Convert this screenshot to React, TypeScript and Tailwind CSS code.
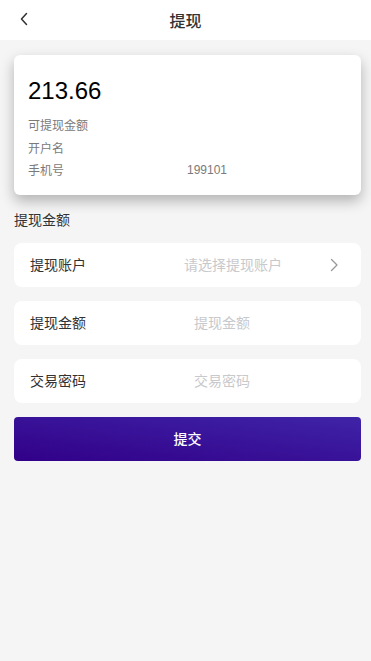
import { type FC } from 'react';

const FONT = { fontFamily: '"PingFang SC", "Noto Sans CJK SC", "Noto Sans", sans-serif' };

interface FieldRowProps {
  label: string;
  placeholder: string;
  arrow?: boolean;
  indent: string;
}

const FieldRow: FC<FieldRowProps> = ({ label, placeholder, arrow, indent }) => (
  <div className="flex h-[44px] items-center rounded-[8px] bg-white pl-4 pr-[19px]">
    <span className="w-[100px] text-[14px] text-[#323233]">{label}</span>
    <span className={`flex-1 text-[14px] text-[#c8c9cc] ${indent}`}>{placeholder}</span>
    {arrow ? (
      <svg width="16" height="16" viewBox="0 0 16 16" fill="none" className="text-[#969799]">
        <path d="M5.5 2.5 L11 8 L5.5 13.5" stroke="currentColor" strokeWidth="1.3" strokeLinecap="round" strokeLinejoin="round" />
      </svg>
    ) : null}
  </div>
);

const App: FC = () => {
  return (
    <div className="min-h-[661px] w-full bg-[#f5f5f5]" style={FONT}>
      <header className="relative flex h-[40px] items-center justify-center bg-white">
        <button type="button" className="absolute left-[15px] top-[10px] text-[#323233]">
          <svg width="18" height="18" viewBox="0 0 18 18" fill="none">
            <path d="M11.5 3.5 L6.5 9 L11.5 14.5" stroke="currentColor" strokeWidth="1.5" strokeLinecap="round" strokeLinejoin="round" />
          </svg>
        </button>
        <h1 className="text-[16px] font-medium text-[#323233]">提现</h1>
      </header>

      <div className="pl-[14px] pr-[10px] pt-[15px]">
        <div className="rounded-[6px] bg-white px-[14px] pb-[13px] pt-[22px] shadow-[0_6px_14px_rgba(0,0,0,0.28)]">
          <div className="text-[24px] leading-[28px] text-black" style={{ fontFamily: '"Helvetica Neue", "Liberation Sans", Arial, sans-serif' }}>
            213.66
          </div>
          <div className="mt-[9px] text-[12px] leading-[22.5px] text-[#7a7a7a]">
            <div>可提现金额</div>
            <div>开户名</div>
            <div className="flex">
              <span className="w-[159px]">手机号</span>
              <span style={{ fontFamily: '"Liberation Sans", Arial, sans-serif' }}>199101</span>
            </div>
          </div>
        </div>

        <div className="mt-[14px] text-[14px] leading-[20px] text-[#323233]">提现金额</div>

        <div className="mt-[14px] space-y-[14px]">
          <FieldRow label="提现账户" placeholder="请选择提现账户" arrow indent="pl-[54px]" />
          <FieldRow label="提现金额" placeholder="提现金额" indent="pl-[64px]" />
          <FieldRow label="交易密码" placeholder="交易密码" indent="pl-[64px]" />
        </div>

        <button
          type="button"
          className="mt-[14px] flex h-[44px] w-full items-center justify-center rounded-[4px] bg-[linear-gradient(to_top_right,#310088,#3f24a8)] text-[14px] font-medium text-white"
        >
          提交
        </button>
      </div>
    </div>
  );
};

export default App;
